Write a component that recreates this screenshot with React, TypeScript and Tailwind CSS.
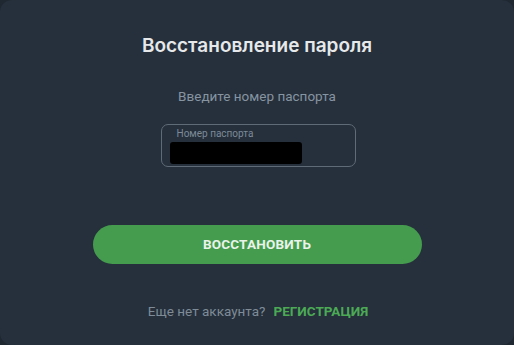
const App = () => {
  return (
    <div className="w-[514px] h-[345px] bg-[#1f2731] font-['Roboto',sans-serif]">
      <div className="w-full h-full rounded-[12px] bg-[#25303c] flex flex-col items-center">
        <h1 className="mt-[33px] text-[19px] leading-[26px] font-semibold text-[#e6e8ea] font-['Inter',sans-serif]">
          Восстановление пароля
        </h1>
        <p className="mt-[28px] text-[13.5px] leading-[18px] text-[#8794a1]">Введите номер паспорта</p>
        <div className="mt-[19px] ml-[2px] w-[195px] h-[43px] rounded-[7px] border border-[#5f6b77] relative">
          <span className="absolute left-[15px] top-[3px] text-[10px] leading-[12px] text-[#7d8a97]">Номер паспорта</span>
          <div className="absolute left-[8px] top-[17px] w-[132px] h-[22px] bg-black rounded-[3px]" />
        </div>
        <button className="mt-[58px] w-[329px] h-[39px] rounded-full bg-[#459c4e] text-[13.5px] font-bold tracking-[0.2px] text-[#e9f3ea]">
          ВОССТАНОВИТЬ
        </button>
        <div className="mt-[38px] text-[13.5px] leading-[18px] flex gap-[8px] ml-[2px]">
          <span className="text-[#7f8b97]">Еще нет аккаунта?</span>
          <span className="font-bold text-[#4caa55]">РЕГИСТРАЦИЯ</span>
        </div>
      </div>
    </div>
  )
}

export default App
